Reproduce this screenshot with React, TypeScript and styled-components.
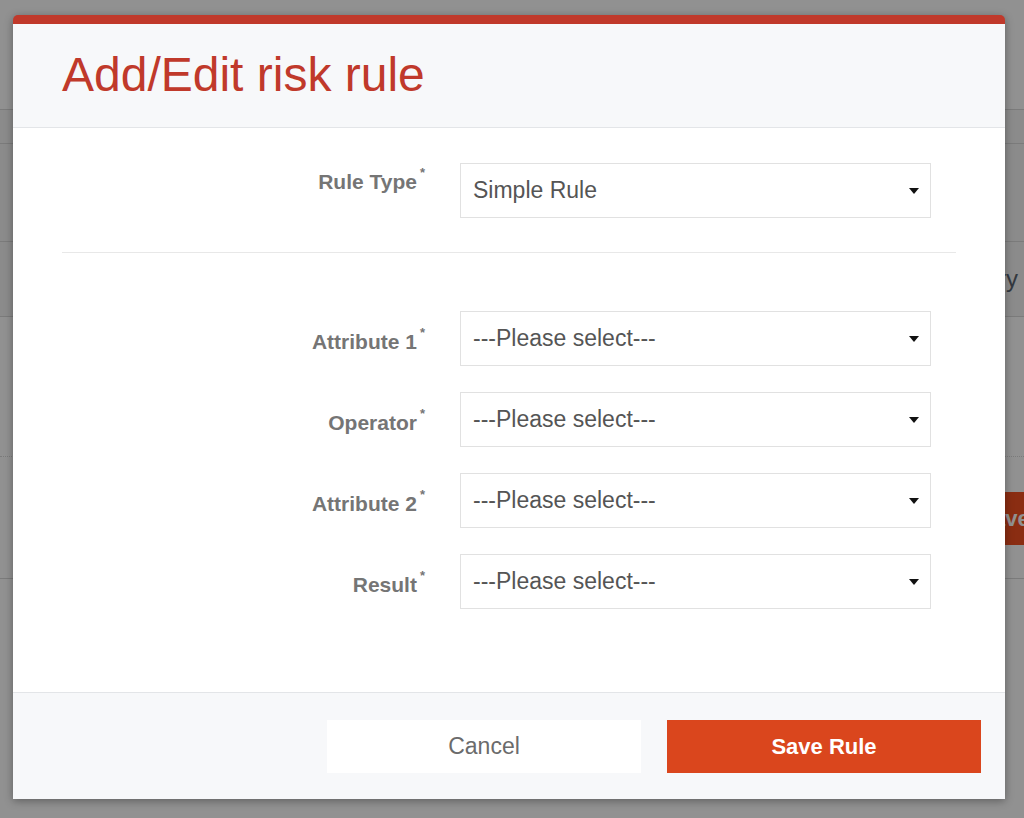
import styled, { createGlobalStyle } from 'styled-components';

const GlobalStyle = createGlobalStyle`
  * {
    box-sizing: border-box;
  }
  body {
    margin: 0;
    font-family: "Liberation Sans", Arial, Helvetica, sans-serif;
    overflow: hidden;
  }
`;

const Page = styled.div`
  position: relative;
  width: 1024px;
  height: 818px;
  overflow: hidden;
  background: #fff;
`;

// page behind the dialog
const BackPage = styled.div`
  display: flex;
  flex-direction: column;
`;

const Band = styled.div<{ $h: number; $tint?: boolean; $dotted?: boolean }>`
  height: ${(p) => p.$h}px;
  flex-shrink: 0;
  background: ${(p) => (p.$tint ? '#f4f4f4' : '#fff')};
  border-bottom: 1px ${(p) => (p.$dotted ? 'dotted' : 'solid')} #d8d8d8;
  display: flex;
  align-items: center;
  justify-content: flex-end;
`;

const ColumnHead = styled.span`
  font-size: 24px;
  color: #5b6571;
  padding-right: 6px;
`;

const ActionRow = styled.div`
  height: 122px;
  padding-top: 35px;
  display: flex;
  align-items: flex-start;
  justify-content: flex-end;
  border-bottom: 1px solid #d8d8d8;
`;

const BackButton = styled.div`
  width: 140px;
  height: 53px;
  margin-right: -50px;
  flex-shrink: 0;
  background: #f24f20;
  color: #fff;
  font-size: 22px;
  font-weight: bold;
  display: flex;
  align-items: center;
  justify-content: center;
`;

const Overlay = styled.div`
  position: absolute;
  inset: 0;
  background: rgba(0, 0, 0, 0.43);
`;

const Modal = styled.div`
  position: absolute;
  top: 15px;
  left: 13px;
  width: 992px;
  background: #fff;
  border-top: 9px solid #c0392b;
  border-radius: 5px 5px 0 0;
  box-shadow: 0 2px 8px rgba(0, 0, 0, 0.35);
`;

const Header = styled.div`
  background: #f7f8fa;
  padding: 23px 49px 24px;
  border-bottom: 1px solid #e3e5e8;
`;

const Title = styled.h1`
  margin: 0;
  font-size: 48px;
  line-height: 56px;
  font-weight: normal;
  color: #c0392b;
`;

const Body = styled.div`
  padding: 35px 49px 83px;
`;

const Fields = styled.div`
  display: flex;
  flex-direction: column;
  gap: 26px;
`;

const FormRow = styled.div`
  display: flex;
  align-items: flex-start;
`;

const Label = styled.label<{ $top: number }>`
  width: 363px;
  margin-right: 35px;
  padding-top: ${(p) => p.$top}px;
  text-align: right;
  font-size: 21px;
  line-height: 24px;
  font-weight: bold;
  color: #757575;
`;

const Star = styled.span`
  font-size: 13px;
  line-height: 0;
  vertical-align: 12px;
  margin-left: 3px;
`;

const Select = styled.div`
  width: 471px;
  height: 55px;
  border: 1px solid #e1e1e1;
  padding: 0 11px 0 12px;
  display: flex;
  align-items: center;
  justify-content: space-between;
  font-size: 23px;
  color: #555;
`;

const Caret = styled.span`
  width: 0;
  height: 0;
  border-left: 5.5px solid transparent;
  border-right: 5.5px solid transparent;
  border-top: 6px solid #111;
`;

const Divider = styled.hr`
  margin: 34px 0 58px;
  border: 0;
  border-top: 1px solid #e8e8e8;
`;

const Footer = styled.div`
  background: #f7f8fa;
  border-top: 1px solid #e3e5e8;
  padding: 27px 24px 26px;
  display: flex;
  justify-content: flex-end;
  gap: 26px;
`;

const Button = styled.button<{ $primary?: boolean }>`
  width: 314px;
  height: 53px;
  border: 0;
  font-family: inherit;
  font-size: ${(p) => (p.$primary ? '22px' : '23px')};
  font-weight: ${(p) => (p.$primary ? 'bold' : 'normal')};
  background: ${(p) => (p.$primary ? '#da461d' : '#fff')};
  color: ${(p) => (p.$primary ? '#fff' : '#6b6b6b')};
  cursor: pointer;
`;

interface IField {
  label: string;
  value: string;
}

const fields: IField[] = [
  { label: 'Attribute 1', value: '---Please select---' },
  { label: 'Operator', value: '---Please select---' },
  { label: 'Attribute 2', value: '---Please select---' },
  { label: 'Result', value: '---Please select---' },
];

function Field({ label, value, top }: IField & { top: number }) {
  return (
    <FormRow>
      <Label $top={top}>
        {label}
        <Star>*</Star>
      </Label>
      <Select>
        <span>{value}</span>
        <Caret />
      </Select>
    </FormRow>
  );
}

function App() {
  return (
    <Page>
      <GlobalStyle />
      <BackPage>
        <Band $h={110} />
        <Band $h={34} $tint />
        <Band $h={98} $tint />
        <Band $h={75} $tint>
          <ColumnHead>Category</ColumnHead>
        </Band>
        <Band $h={140} $dotted />
        <ActionRow>
          <BackButton>Save</BackButton>
        </ActionRow>
      </BackPage>
      <Overlay />
      <Modal>
        <Header>
          <Title>Add/Edit risk rule</Title>
        </Header>
        <Body>
          <Field label="Rule Type" value="Simple Rule" top={7} />
          <Divider />
          <Fields>
            {fields.map((f) => (
              <Field key={f.label} {...f} top={19} />
            ))}
          </Fields>
        </Body>
        <Footer>
          <Button>Cancel</Button>
          <Button $primary>Save Rule</Button>
        </Footer>
      </Modal>
    </Page>
  );
}

export default App;
